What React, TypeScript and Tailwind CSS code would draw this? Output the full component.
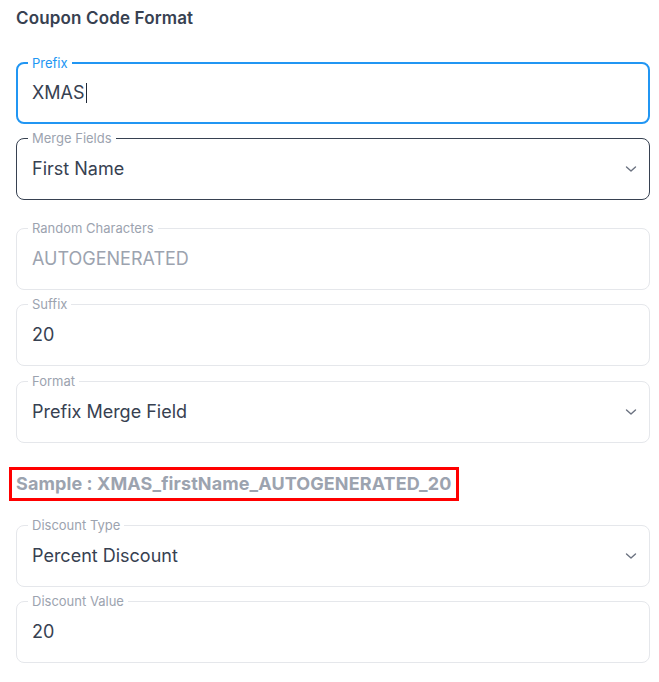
import React from 'react';

type FieldProps = {
  label: string;
  value: string;
  select?: boolean;
  focused?: boolean;
  hovered?: boolean;
  disabled?: boolean;
  caret?: boolean;
  className?: string;
};

const Chevron = () => (
  <svg width="12" height="8" viewBox="0 0 12 8" fill="none" className="shrink-0">
    <path d="M1.5 2L6 6L10.5 2" stroke="#6b7280" strokeWidth="1.4" strokeLinecap="round" strokeLinejoin="round" />
  </svg>
);

const Field: React.FC<FieldProps> = ({ label, value, select, focused, hovered, disabled, caret, className = '' }) => {
  const border = focused
    ? 'border-2 border-[#2196f3] px-[10px]'
    : hovered
    ? 'border border-[#374151] px-[11px]'
    : 'border border-[#e5e7eb] px-[11px]';
  const labelColor = focused ? 'text-[#2196f3]' : 'text-[#9ca3af]';
  const valueColor = disabled ? 'text-[#9ca3af]' : 'text-[#374151]';

  return (
    <fieldset className={`rounded-[8px] min-w-0 ${border} ${className}`}>
      <legend className={`px-1 text-[13px] leading-4 ${labelColor}`}>{label}</legend>
      <div className={`flex items-center justify-between pl-1 pr-[1px] ${focused ? 'pt-[10px] pb-[17px]' : 'pt-[11px] pb-[18px]'}`}>
        <span className={`text-[18px] leading-6 ${valueColor} flex items-center`}>
          {value}
          {caret && <span className="inline-block w-px h-[20px] bg-[#1f2937] ml-[1px]" />}
        </span>
        {select && <Chevron />}
      </div>
    </fieldset>
  );
};

export default function App() {
  return (
    <div className="w-[659px] h-[682px] bg-white pl-4 pr-[9px] pt-[6px] font-['Inter',sans-serif] overflow-hidden">
      <h2 className="text-[17px] leading-6 tracking-[0.15px] font-semibold text-[#374151]">Coupon Code Format</h2>

      <div className="mt-[25px] flex flex-col">
        <Field label="Prefix" value="XMAS" focused caret />
        <Field label="Merge Fields" value="First Name" select hovered className="mt-[6px]" />
        <Field label="Random Characters" value="AUTOGENERATED" disabled className="mt-[20px]" />
        <Field label="Suffix" value="20" className="mt-[6px]" />
        <Field label="Format" value="Prefix Merge Field" select className="mt-[7px]" />

        <div className="mt-[24px] -ml-[7px] w-[450px] border-[3px] border-[#ff0000] px-1">
          <p className="text-[18px] leading-[28px] tracking-[0.1px] font-bold text-[#9ca3af] whitespace-nowrap">
            Sample : XMAS_firstName_AUTOGENERATED_20
          </p>
        </div>

        <Field label="Discount Type" value="Percent Discount" select className="mt-[16px]" />
        <Field label="Discount Value" value="20" className="mt-[6px]" />
      </div>
    </div>
  );
}
